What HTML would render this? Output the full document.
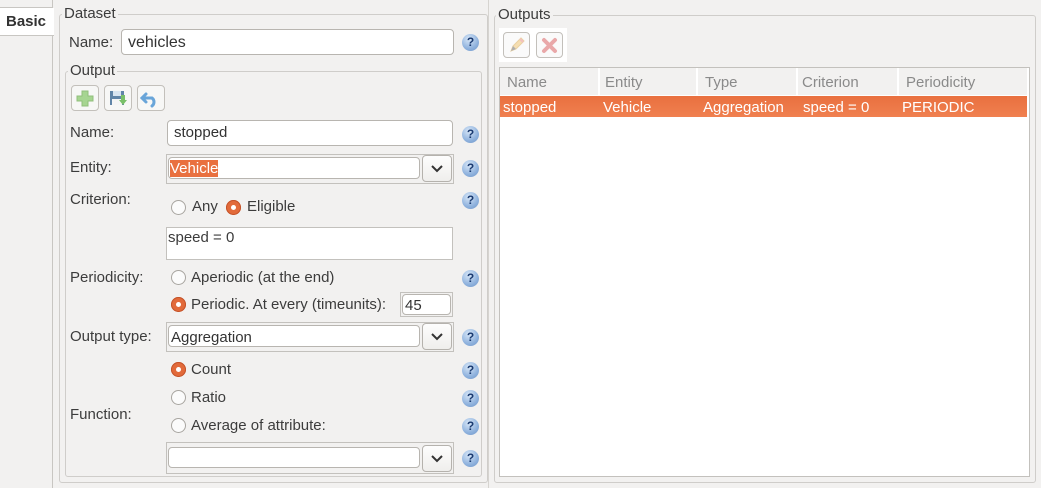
<!DOCTYPE html>
<html><head><meta charset="utf-8"><style>
*{box-sizing:border-box;margin:0;padding:0}
body{width:1041px;height:488px;overflow:hidden;background:#f2f1f0;font-family:"Liberation Sans",sans-serif;font-size:15px;color:#3c3c3c;position:relative}
.a{position:absolute}
.grp{position:absolute;border:1px solid #cfcdca;border-radius:3px}
.gt{position:absolute;background:#f2f1f0;padding:0 2px;font-size:15px;color:#3c3c3c;line-height:16px}
.in{position:absolute;background:#fff;border:1px solid #b8b5b0;border-radius:4px;padding-left:6px;padding-top:1px;line-height:22px;color:#333}
.lbl{position:absolute;line-height:18px}
.hq{position:absolute;width:17px;height:17px;border-radius:50%;background:radial-gradient(circle at 40% 30%,#d7e6f7,#8fb2dd 60%,#6d94c8);color:#1a3a70;font-weight:bold;font-size:12px;text-align:center;line-height:17px}
.rb{position:absolute;width:15px;height:15px;border-radius:50%;border:1px solid #a8a5a0;background:#fbfbfb}
.rb.on{border:none;background:#e26a3a;box-shadow:inset 0 0 0 1px #c4532a}
.rb.on:after{content:"";position:absolute;left:5px;top:5px;width:5px;height:5px;border-radius:50%;background:#fff}
.cb{position:absolute;border:1px solid #c3c1bd;background:#f2f1f0}
.btn{position:absolute;border:1px solid #b5b2ad;border-radius:4px;background:linear-gradient(#fdfdfd,#efeeec)}
.tb{position:absolute;width:28px;height:26px;border:1px solid #c3c0bb;border-radius:4px;background:#f7f7f6}
</style></head><body>
<div class="a" style="left:0;top:0;width:53px;height:488px;background:#f2f1f0;border-right:1px solid #c8c6c2"></div>
<div class="a" style="left:0;top:0;width:53px;height:8px;border-bottom:1px solid #c8c6c2"></div>
<div class="a" style="left:0;top:8px;width:54px;height:28px;background:#fff;border-bottom:1px solid #c8c6c2;font-weight:bold;font-size:15px;line-height:28px;padding-left:6px;color:#333">Basic</div>
<div class="a" style="left:488px;top:0;width:1px;height:488px;background:#d6d4d0"></div>

<div class="grp" style="left:59px;top:14px;width:429px;height:469px"></div>
<div class="gt" style="left:62px;top:6px">Dataset</div>
<div class="lbl" style="left:69px;top:34px">Name:</div>
<div class="in" style="left:121px;top:29px;width:333px;height:26px;font-size:16px;line-height:24px">vehicles</div>
<div class="hq" style="left:462px;top:34px">?</div>

<div class="grp" style="left:65px;top:71px;width:417px;height:406px"></div>
<div class="gt" style="left:68px;top:63px">Output</div>
<div class="tb" style="left:71px;top:85px"><svg width="26" height="24" opacity="0.65"><path d="M10 5h6v5h5v5h-5v5h-6v-5H5v-5h5z" fill="#7cc45c" stroke="#5aa23c"/></svg></div>
<div class="tb" style="left:104px;top:85px"><svg width="26" height="24" opacity="0.75"><rect x="5" y="5" width="14" height="14" fill="#2f5f8f"/><rect x="8" y="5" width="8" height="5" fill="#cfe0f0"/><rect x="7" y="13" width="10" height="6" fill="#f5f5f5"/><path d="M16 9h4v5h2l-4 5-4-5h2z" fill="#4fae3a"/></svg></div>
<div class="tb" style="left:137px;top:85px"><svg width="26" height="24" opacity="0.75"><path d="M8 8 L4 12 L8 16 M4 12 H14 A5 5 0 0 1 14 20" fill="none" stroke="#3a8ad0" stroke-width="3" stroke-linecap="round"/></svg></div>

<div class="lbl" style="left:70px;top:124px">Name:</div>
<div class="in" style="left:167px;top:120px;width:286px;height:26px">stopped</div>
<div class="hq" style="left:462px;top:126px">?</div>

<div class="lbl" style="left:70px;top:159px">Entity:</div>
<div class="cb" style="left:166px;top:154px;width:288px;height:30px"></div>
<div class="in" style="left:168px;top:157px;width:252px;height:22px;padding-left:1px;line-height:20px"><span style="background:#e9703f;color:#fff">Vehicle</span></div>
<div class="btn" style="left:422px;top:155px;width:30px;height:27px"><svg width="28" height="25"><path d="M9 10l5 5 5-5" fill="none" stroke="#333" stroke-width="2"/></svg></div>
<div class="hq" style="left:462px;top:160px">?</div>

<div class="lbl" style="left:70px;top:191px">Criterion:</div>
<div class="hq" style="left:462px;top:192px">?</div>
<div class="rb" style="left:171px;top:200px"></div><div class="lbl" style="left:192px;top:198px">Any</div>
<div class="rb on" style="left:226px;top:200px"></div><div class="lbl" style="left:247px;top:198px">Eligible</div>
<div class="a" style="left:166px;top:227px;width:287px;height:33px;background:#fff;border:1px solid #c3c1bd;padding-left:1px;line-height:20px">speed = 0</div>

<div class="lbl" style="left:70px;top:269px">Periodicity:</div>
<div class="hq" style="left:462px;top:270px">?</div>
<div class="rb" style="left:171px;top:270px"></div><div class="lbl" style="left:191px;top:269px">Aperiodic (at the end)</div>
<div class="rb on" style="left:171px;top:297px"></div><div class="lbl" style="left:191px;top:296px">Periodic. At every (timeunits):</div>
<div class="cb" style="left:400px;top:292px;width:53px;height:25px"></div>
<div class="in" style="left:402px;top:294px;width:49px;height:21px;padding-left:2px;line-height:19px">45</div>

<div class="lbl" style="left:70px;top:328px">Output type:</div>
<div class="cb" style="left:166px;top:322px;width:288px;height:30px"></div>
<div class="in" style="left:168px;top:325px;width:252px;height:22px;padding-left:2px;line-height:21px">Aggregation</div>
<div class="btn" style="left:422px;top:323px;width:30px;height:27px"><svg width="28" height="25"><path d="M9 10l5 5 5-5" fill="none" stroke="#333" stroke-width="2"/></svg></div>
<div class="hq" style="left:462px;top:329px">?</div>

<div class="rb on" style="left:171px;top:362px"></div><div class="lbl" style="left:191px;top:361px">Count</div>
<div class="hq" style="left:462px;top:362px">?</div>
<div class="rb" style="left:171px;top:390px"></div><div class="lbl" style="left:191px;top:389px">Ratio</div>
<div class="hq" style="left:462px;top:390px">?</div>
<div class="lbl" style="left:70px;top:406px">Function:</div>
<div class="rb" style="left:171px;top:418px"></div><div class="lbl" style="left:191px;top:417px">Average of attribute:</div>
<div class="hq" style="left:462px;top:418px">?</div>
<div class="cb" style="left:166px;top:442px;width:288px;height:32px"></div>
<div class="in" style="left:168px;top:447px;width:252px;height:21px"></div>
<div class="btn" style="left:422px;top:445px;width:30px;height:27px"><svg width="28" height="25"><path d="M9 10l5 5 5-5" fill="none" stroke="#333" stroke-width="2"/></svg></div>
<div class="hq" style="left:462px;top:450px">?</div>

<div class="grp" style="left:494px;top:15px;width:542px;height:468px"></div>
<div class="gt" style="left:496px;top:7px">Outputs</div>
<div class="a" style="left:499px;top:28px;width:68px;height:34px;background:#fff"></div>
<div class="tb" style="left:503px;top:32px;width:27px;height:26px;background:#fafafa"><svg width="25" height="24" opacity="0.5"><path d="M7 18l2-5 8-8 3 3-8 8z" fill="#f2c46a" stroke="#d9a84a"/><path d="M16 6l3 3" stroke="#e88" stroke-width="2"/><path d="M7 18l2-5 3 3z" fill="#666"/></svg></div>
<div class="tb" style="left:536px;top:32px;width:27px;height:26px;background:#fafafa"><svg width="25" height="24" opacity="0.5"><path d="M7 7l11 11M18 7L7 18" stroke="#d9595a" stroke-width="4" stroke-linecap="round"/></svg></div>

<div class="a" style="left:499px;top:67px;width:531px;height:410px;background:#fff;border:1px solid #c3c1bd"></div>
<div class="a" style="left:500px;top:68px;width:527px;height:27px;background:#f2f1f0;color:#8a8a8a;line-height:29px">
<span class="a" style="left:7px">Name</span><span class="a" style="left:105px">Entity</span><span class="a" style="left:205px">Type</span><span class="a" style="left:302px">Criterion</span><span class="a" style="left:406px">Periodicity</span>
<div class="a" style="left:98px;top:0;width:2px;height:27px;background:#fff"></div>
<div class="a" style="left:196px;top:0;width:2px;height:27px;background:#fff"></div>
<div class="a" style="left:296px;top:0;width:2px;height:27px;background:#fff"></div>
<div class="a" style="left:397px;top:0;width:2px;height:27px;background:#fff"></div>
</div>
<div class="a" style="left:500px;top:96px;width:527px;height:21px;background:linear-gradient(#e9703f,#f08050);color:#fff;line-height:23px">
<span class="a" style="left:3px">stopped</span><span class="a" style="left:103px">Vehicle</span><span class="a" style="left:203px">Aggregation</span><span class="a" style="left:303px">speed = 0</span><span class="a" style="left:402px">PERIODIC</span>
</div>
</body></html>
